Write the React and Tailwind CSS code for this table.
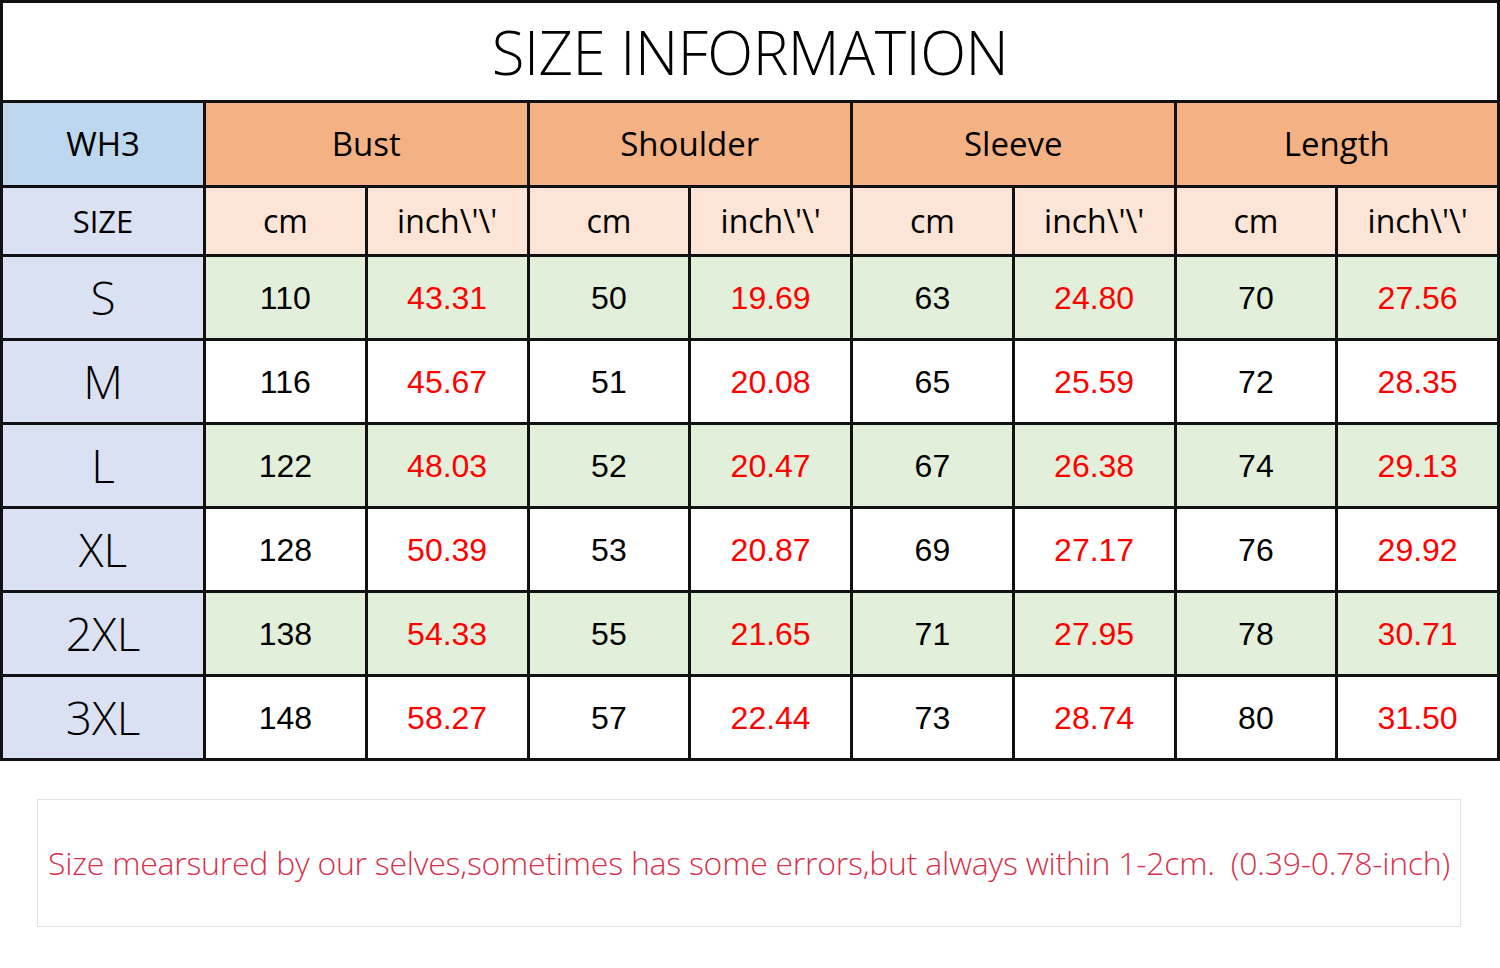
import React from 'react'

const rows = [
  ['S', '110', '43.31', '50', '19.69', '63', '24.80', '70', '27.56'],
  ['M', '116', '45.67', '51', '20.08', '65', '25.59', '72', '28.35'],
  ['L', '122', '48.03', '52', '20.47', '67', '26.38', '74', '29.13'],
  ['XL', '128', '50.39', '53', '20.87', '69', '27.17', '76', '29.92'],
  ['2XL', '138', '54.33', '55', '21.65', '71', '27.95', '78', '30.71'],
  ['3XL', '148', '58.27', '57', '22.44', '73', '28.74', '80', '31.50'],
]

const groups = ['Bust', 'Shoulder', 'Sleeve', 'Length']

const App = () => {
  return (
    <div className="w-[1500px] h-[968px] bg-white font-['Open_Sans','Noto_Sans',sans-serif]">
      <div className="grid grid-cols-[200px_repeat(8,1fr)] grid-rows-[97px_82px_66px_repeat(6,81px)] gap-[3px] p-[3px] bg-[#111] w-[1500px]">
        <div className="col-span-9 bg-white flex items-center justify-center text-[60px] font-light text-black tracking-[-0.5px]">
          SIZE INFORMATION
        </div>

        <div className="bg-[#bdd7ee] flex items-center justify-center text-[33px] text-black">WH3</div>
        {groups.map((g) => (
          <div key={g} className="col-span-2 bg-[#f4b183] flex items-center justify-center text-[33px] text-black">
            {g}
          </div>
        ))}

        <div className="bg-[#d9e1f2] flex items-center justify-center text-[31px] text-black">SIZE</div>
        {groups.map((g) => (
          <React.Fragment key={g}>
            <div className="bg-[#fce4d6] flex items-center justify-center text-[32px] text-black">cm</div>
            <div className="bg-[#fce4d6] flex items-center justify-center text-[32px] text-black">inch\'\'</div>
          </React.Fragment>
        ))}

        {rows.map((r, i) => (
          <React.Fragment key={r[0]}>
            <div className="bg-[#d9e1f2] flex items-center justify-center text-[46px] font-light text-black">
              {r[0]}
            </div>
            {r.slice(1).map((v, j) => (
              <div
                key={j}
                className={`flex items-center justify-center text-[32px] font-['Liberation_Sans',Arial,sans-serif] ${i % 2 === 0 ? 'bg-[#e2efda]' : 'bg-white'} ${j % 2 === 1 ? 'text-[#ff0000]' : 'text-black'}`}
              >
                {v}
              </div>
            ))}
          </React.Fragment>
        ))}
      </div>

      <div className="mt-[38px] ml-[37px] w-[1424px] h-[128px] border border-[#e3e3e3] flex items-center justify-center">
        <div className="text-[32px] font-light tracking-[-0.25px] text-[#d8304a] whitespace-nowrap">
          Size mearsured by our selves,sometimes has some errors,but always within 1-2cm.&nbsp;&nbsp;(0.39-0.78-inch)
        </div>
      </div>
    </div>
  )
}

export default App
